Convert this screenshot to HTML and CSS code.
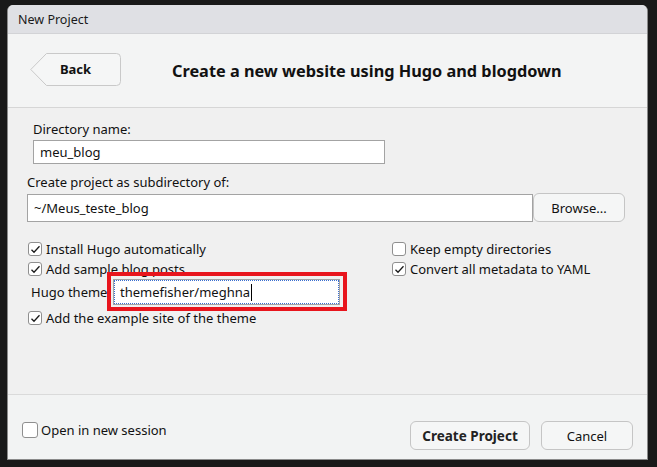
FILE: index.html
```html
<!DOCTYPE html>
<html>
<head>
<meta charset="utf-8">
<link rel="stylesheet" href="styles.css">
</head>
<body>
<div class="dialog">
  <div class="titlebar">New Project</div>
  <div class="header">
    <button class="back">
      <svg class="back-shape" width="91" height="33" viewBox="0 0 91 33"><path d="M0.8 16.5 L16.5 0.5 H86.5 Q90.5 0.5 90.5 4.5 V28.5 Q90.5 32.5 86.5 32.5 H16.5 Z" fill="#f5f6f6" stroke="#c9c9c9" stroke-width="1"/></svg>
      <span class="back-label">Back</span>
    </button>
    <h1 class="heading">Create a new website using Hugo and blogdown</h1>
  </div>
  <div class="content">
    <div class="label indent">Directory name:</div>
    <div class="field dir-field indent">meu_blog</div>
    <div class="label label2">Create project as subdirectory of:</div>
    <div class="path-row">
      <div class="field path-field">~/Meus_teste_blog</div>
      <button class="btn browse">Browse...</button>
    </div>
    <div class="options">
      <div class="col-left">
        <div class="opt"><span class="cb checked"><svg width="11" height="9" viewBox="0 0 11 9"><path d="M1.5 4.8 L4 7.3 L9.5 1.3" fill="none" stroke="#1a1a1a" stroke-width="1.3"/></svg></span>Install Hugo automatically</div>
        <div class="opt"><span class="cb checked"><svg width="11" height="9" viewBox="0 0 11 9"><path d="M1.5 4.8 L4 7.3 L9.5 1.3" fill="none" stroke="#1a1a1a" stroke-width="1.3"/></svg></span>Add sample blog posts</div>
        <div class="theme-row">
          <span class="theme-label">Hugo theme:</span>
          <div class="theme-wrap">
            <div class="theme-input"><span>themefisher/meghna</span><span class="caret"></span></div>
            <div class="highlight"></div>
          </div>
        </div>
        <div class="opt opt-last"><span class="cb checked"><svg width="11" height="9" viewBox="0 0 11 9"><path d="M1.5 4.8 L4 7.3 L9.5 1.3" fill="none" stroke="#1a1a1a" stroke-width="1.3"/></svg></span>Add the example site of the theme</div>
      </div>
      <div class="col-right">
        <div class="opt"><span class="cb"></span>Keep empty directories</div>
        <div class="opt"><span class="cb checked"><svg width="11" height="9" viewBox="0 0 11 9"><path d="M1.5 4.8 L4 7.3 L9.5 1.3" fill="none" stroke="#1a1a1a" stroke-width="1.3"/></svg></span>Convert all metadata to YAML</div>
      </div>
    </div>
  </div>
  <div class="footer">
    <div class="opt session"><span class="cb cb-big"></span>Open in new session</div>
    <div class="actions">
      <button class="btn primary">Create Project</button>
      <button class="btn cancel">Cancel</button>
    </div>
  </div>
</div>
</body>
</html>
```
FILE: styles.css
```css
* { box-sizing: border-box; }
html, body { margin: 0; padding: 0; }
body {
  background: #191919;
  width: 657px;
  height: 467px;
  overflow: hidden;
  font-family: "Noto Sans", "Open Sans", sans-serif;
  font-size: 13px;
  color: #111;
  padding: 5px 0 0 7px;
}
.dialog {
  width: 641px;
  height: 455px;
  border-radius: 6px 6px 0 0;
  overflow: hidden;
  display: flex;
  flex-direction: column;
  background: #f0f0f0;
  border: 1px solid #8a8a8a;
  border-top: none;
}
.titlebar {
  height: 29px;
  background: #dfe0e4;
  padding-left: 10px;
  line-height: 30px;
  font-size: 12.5px;
  color: #1a1a1a;
  border-bottom: 1px solid #d2d3d6;
}
.header {
  height: 74px;
  background: #f3f4f4;
  border-bottom: 1px solid #d6d6d6;
  display: flex;
  align-items: center;
  padding-left: 22px;
}
.back {
  position: relative;
  width: 91px;
  height: 33px;
  padding: 0;
  border: none;
  background: none;
  font-family: inherit;
  margin-top: -3px;
}
.back-shape { position: absolute; left: 0; top: 0; }
.back-label {
  position: relative;
  font-weight: bold;
  font-size: 13px;
  color: #111;
}
.heading {
  margin: 0 0 0 51px;
  font-size: 16.3px;
  font-weight: bold;
  color: #111;
}
.content {
  flex: 1;
  padding: 13px 0 0 19px;
  background: #f0f0f0;
}
.indent { margin-left: 6px; }
.label { line-height: 16px; height: 16px; }
.field {
  background: #fff;
  border: 1px solid #a3a3a3;
  padding-left: 6px;
  display: flex;
  align-items: center;
  font-size: 13px;
}
.dir-field { width: 352px; height: 24px; margin-top: 3px; }
.label2 { margin-top: 10px; }
.path-row {
  display: flex;
  align-items: center;
  margin-top: 3px;
  height: 29px;
}
.path-field { width: 506px; height: 28px; }
.btn {
  font-family: inherit;
  font-size: 13px;
  color: #111;
  background: #f5f6f6;
  border: 1px solid #c5c5c5;
  border-radius: 6px;
  padding: 0;
}
.browse { width: 92px; height: 29px; margin-left: 0; }
.options {
  display: flex;
  margin-top: 17px;
}
.col-left { width: 364px; }
.opt {
  display: flex;
  align-items: center;
  height: 20px;
}
.opt-last { margin-top: 3px; }
.cb {
  width: 14px;
  height: 14px;
  background: #fff;
  border: 1px solid #8f8f8f;
  border-radius: 3px;
  margin: 0 4px 0 1px;
  display: flex;
  align-items: center;
  justify-content: center;
  flex: none;
}
.cb-big { width: 16px; height: 16px; margin-right: 3px; margin-left: 0; }
.theme-row {
  display: flex;
  align-items: center;
  height: 26px;
}
.theme-label { margin-left: 4px; width: 83px; flex: none; }
.theme-wrap { position: relative; }
.theme-input {
  width: 225px;
  height: 24px;
  background: #fff;
  border: 1px dotted #3a6fd0;
  outline: 1px solid #a3a3a3;
  display: flex;
  align-items: center;
  padding-left: 5px;
  font-size: 13px;
}
.caret {
  display: inline-block;
  width: 1px;
  height: 17px;
  background: #000;
  margin-left: 1px;
}
.highlight {
  position: absolute;
  left: -7px;
  top: -8px;
  right: -8px;
  bottom: -7px;
  border: 4px solid #e8151d;
}
.footer {
  height: 65px;
  border-top: 1px solid #dadada;
  background: #f2f3f3;
  display: flex;
  align-items: flex-start;
  justify-content: space-between;
  padding: 26px 14px 0 14px;
}
.session { height: 16px; margin-top: 1px; }
.actions { display: flex; gap: 11px; }
.primary {
  width: 120px;
  height: 29px;
  font-weight: bold;
  font-size: 13.5px;
  color: #222;
}
.cancel { width: 92px; height: 29px; }
```
